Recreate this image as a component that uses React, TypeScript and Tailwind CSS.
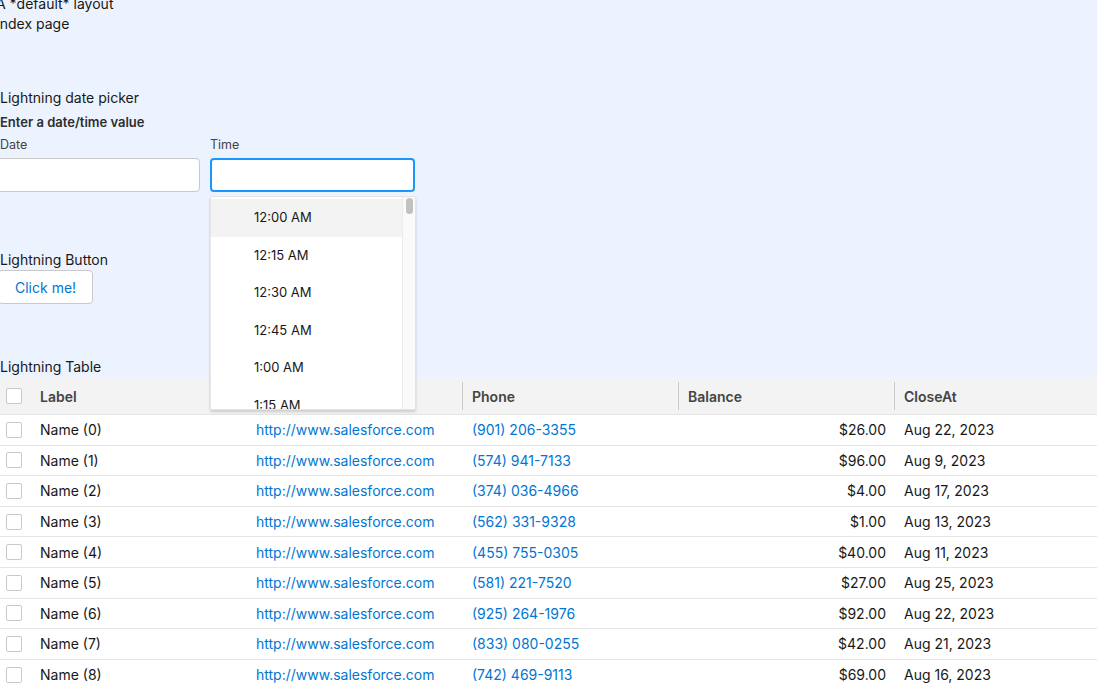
import React from "react"

const rows = [
  { phone: "(901) 206-3355", balance: "$26.00", close: "Aug 22, 2023" },
  { phone: "(574) 941-7133", balance: "$96.00", close: "Aug 9, 2023" },
  { phone: "(374) 036-4966", balance: "$4.00", close: "Aug 17, 2023" },
  { phone: "(562) 331-9328", balance: "$1.00", close: "Aug 13, 2023" },
  { phone: "(455) 755-0305", balance: "$40.00", close: "Aug 11, 2023" },
  { phone: "(581) 221-7520", balance: "$27.00", close: "Aug 25, 2023" },
  { phone: "(925) 264-1976", balance: "$92.00", close: "Aug 22, 2023" },
  { phone: "(833) 080-0255", balance: "$42.00", close: "Aug 21, 2023" },
  { phone: "(742) 469-9113", balance: "$69.00", close: "Aug 16, 2023" },
  { phone: "(216) 558-0417", balance: "$13.00", close: "Aug 19, 2023" },
]

const times = ["12:00 AM", "12:15 AM", "12:30 AM", "12:45 AM", "1:00 AM", "1:15 AM", "1:30 AM"]

const cols = "grid grid-cols-[32px_215px_215px_216px_216px_1fr]"

function Checkbox() {
  return <span className="block h-4 w-4 rounded-[2px] border border-[#c9c9c9] bg-white" />
}

export default function App() {
  return (
    <div className="h-screen overflow-hidden bg-[#ecf3fe] font-['Inter',Arial,sans-serif] text-[14px] text-[#181818]">
      {/* page header */}
      <div className="-mt-[6px] -ml-[4px] leading-[20px]">
        <div>A *default* layout</div>
        <div>Index page</div>
      </div>

      {/* date picker */}
      <div className="mt-[54px]">
        <div className="leading-[20px]">Lightning date picker</div>
        <div className="mt-[4px] text-[13px] font-semibold leading-[20px] text-[#2e2e2e]">Enter a date/time value</div>
        <div className="-ml-[5px] mt-[5px] flex gap-[10px]">
          <div className="w-[205px]">
            <div className="pl-[5px] text-[12.5px] leading-[16px] text-[#444]">Date</div>
            <div className="mt-[5px] h-[34px] rounded-[4px] border border-[#c9c9c9] bg-white" />
          </div>
          <div className="relative w-[205px]">
            <div className="text-[12.5px] leading-[16px] text-[#444]">Time</div>
            <div className="mt-[5px] h-[34px] rounded-[4px] border-2 border-[#1b96ff] bg-white" />
            {/* time dropdown */}
            <div className="absolute left-0 top-[59px] z-10 flex h-[214px] w-[206px] overflow-hidden rounded-[2px] border border-[#e5e5e5] bg-white shadow-[0_2px_3px_rgba(0,0,0,0.16)]">
              <div className="flex-1 pt-[2px]">
                {times.map((t, i) => (
                  <div
                    key={t}
                    className={`flex h-[37.5px] items-center pl-[43px] text-[13px] text-[#181818] ${i === 0 ? "bg-[#f3f3f3]" : ""}`}
                  >
                    {t}
                  </div>
                ))}
              </div>
              <div className="w-[13px] border-l border-[#ececec] bg-[#fafafa] pt-[1px]">
                <div className="mx-auto h-[16px] w-[7px] rounded-full bg-[#c1c1c1]" />
              </div>
            </div>
          </div>
        </div>
      </div>

      {/* button */}
      <div className="mt-[58px]">
        <div className="leading-[20px]">Lightning Button</div>
        <button className="-ml-[2px] h-[34px] rounded-[4px] border border-[#c9c9c9] bg-white px-[16px] text-[14px] text-[#0176d3]">
          Click me!
        </button>
      </div>

      {/* table */}
      <div className="mt-[53px]">
        <div className="leading-[20px]">Lightning Table</div>
        <div className="mt-[1px] bg-white">
          <div className={`${cols} h-[37px] items-center border-b border-[#e5e5e5] bg-[#f3f3f3] font-semibold text-[#444]`}>
            <div className="pl-[6px]">
              <Checkbox />
            </div>
            <div className="pl-[8px]">Label</div>
            <div className="h-full" />
            <div className="flex h-[28px] items-center border-l border-[#c9c9c9] pl-[9px]">Phone</div>
            <div className="flex h-[28px] items-center border-l border-[#c9c9c9] pl-[9px]">Balance</div>
            <div className="flex h-[28px] items-center border-l border-[#c9c9c9] pl-[9px]">CloseAt</div>
          </div>
          {rows.map((r, i) => (
            <div key={i} className={`${cols} h-[30.6px] items-center border-b border-[#e5e5e5]`}>
              <div className="pl-[6px]">
                <Checkbox />
              </div>
              <div className="pl-[8px]">Name ({i})</div>
              <div className="pl-[9px] text-[#0176d3]">http://www.salesforce.com</div>
              <div className="pl-[10px] text-[#0176d3]">{r.phone}</div>
              <div className="pr-[8px] text-right">{r.balance}</div>
              <div className="pl-[10px]">{r.close}</div>
            </div>
          ))}
        </div>
      </div>
    </div>
  )
}
